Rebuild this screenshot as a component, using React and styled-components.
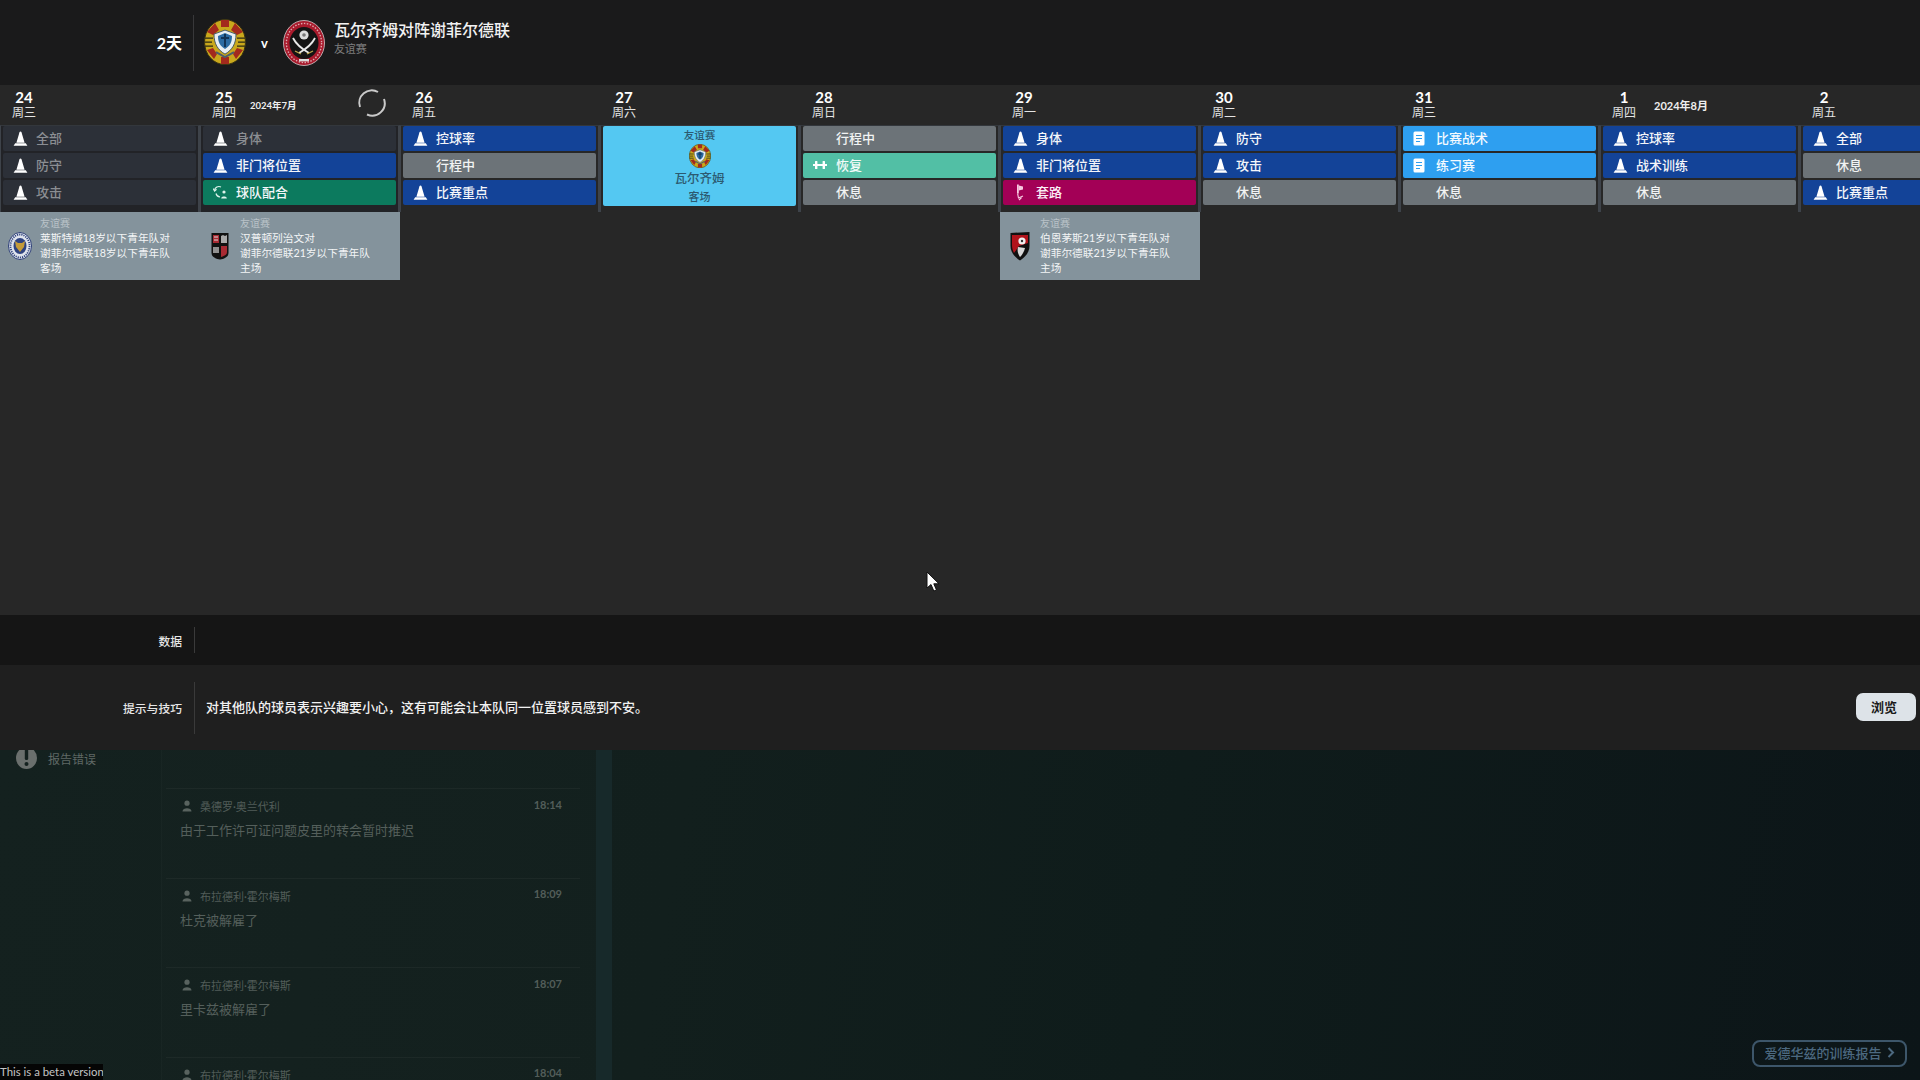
import React from 'react';
import styled, { createGlobalStyle } from 'styled-components';

const GlobalStyle = createGlobalStyle`
  html, body { margin: 0; padding: 0; background: #101a1a; }
  * { box-sizing: border-box; }
`;

const Page = styled.div`
  position: relative;
  width: 1920px;
  height: 1080px;
  overflow: hidden;
  display: flex;
  flex-direction: column;
  font-family: "Lato", "Noto Sans CJK SC", sans-serif;
  color: #fff;
`;

/* top bar with next match */
const TopBar = styled.header`
  height: 85px;
  background: #1a1a1b;
  display: flex;
  align-items: center;
`;

const Countdown = styled.div`
  width: 182px;
  text-align: right;
  font-size: 16px;
  font-weight: 700;
  margin-top: -2px;
`;

const TopDivider = styled.div`
  width: 1px;
  height: 56px;
  margin: 0 10px 0 11px;
  background: #38383a;
`;

const Versus = styled.div`
  display: flex;
  align-items: center;
  gap: 15px;
  margin-right: 9px;
  font-size: 13px;
  font-weight: 700;
`;

const MatchInfo = styled.div`
  margin-top: -9px;
`;

const MatchTitle = styled.div`
  font-size: 16px;
  font-weight: 500;
  line-height: 22px;
  color: #f2f2f2;
`;

const MatchSub = styled.div`
  font-size: 11px;
  line-height: 16px;
  color: #7d7d7d;
`;

/* calendar */
const Calendar = styled.section`
  height: 530px;
  background: #272727;
  display: flex;
  overflow: hidden;
`;

const Day = styled.div`
  flex: 0 0 200px;
  display: flex;
  flex-direction: column;
`;

const DayHead = styled.div`
  height: 40px;
  display: flex;
  align-items: center;
  padding-left: 12px;
`;

const DateStack = styled.div`
  width: 24px;
  text-align: center;
  font-weight: 700;
  font-size: 15px;
  line-height: 15px;
  white-space: nowrap;
  display: flex;
  flex-direction: column;
  align-items: center;
  padding-bottom: 1px;

  span {
    font-size: 12px;
    font-weight: 400;
    color: #e4e4e4;
    line-height: 15px;
  }
`;

const MonthLabel = styled.div`
  margin-left: ${(p) => p.$offset}px;
  font-size: ${(p) => p.$size}px;
  font-weight: 700;
  white-space: nowrap;
  color: #eee;
`;

const Spinner = styled.svg`
  margin-left: auto;
  margin-right: 13px;
  margin-top: -5px;
`;

const Slots = styled.div`
  height: 87px;
  padding: 0 2px 7px;
  border-left: 1px solid #3e434a;
  border-right: 2px solid #3e434a;
  border-top: 1px solid #33373c;
  display: flex;
  flex-direction: column;
  gap: 2px;
  background: ${(p) => (p.$dim ? '#222327' : 'transparent')};
`;

const tones = {
  dim: ['#2c3038', '#8b8e93'],
  blue: ['#134398', '#f4f6fa'],
  grey: ['#6c7378', '#f2f3f3'],
  green: ['#0c7a5e', '#f4f6fa'],
  teal: ['#52bfa5', '#f4fbf9'],
  magenta: ['#a30056', '#fbeef5'],
  sky: ['#2e9ff0', '#f4faff'],
};

const Slot = styled.div`
  flex: 0 0 25px;
  display: flex;
  align-items: center;
  border-radius: 2px;
  padding: 0 0 2px 10px;
  font-size: 13px;
  font-weight: 500;
  background: ${(p) => tones[p.$tone][0]};
  color: ${(p) => tones[p.$tone][1]};
`;

const SlotIcon = styled.span`
  flex: 0 0 23px;
  height: 16px;
  display: flex;
  align-items: center;
  margin-top: 1px;
`;

const MatchCard = styled.div`
  flex: 0 0 80px;
  border-radius: 2px;
  background: #54c8f2;
  color: #2c5a70;
  display: flex;
  flex-direction: column;
  align-items: center;
  padding-top: 1px;
  font-size: 10.5px;
  font-weight: 500;
`;

const MatchCardBadge = styled.div`
  margin-top: 2px;
  line-height: 0;
`;

const MatchCardName = styled.div`
  font-size: 12.5px;
  line-height: 18px;
  margin-top: 2px;
`;

const MatchCardPlace = styled.div`
  font-size: 11px;
  line-height: 17px;
`;

const Fixture = styled.div`
  height: 68px;
  background: #84939c;
  display: flex;
  align-items: center;
  padding-left: 8px;
`;

const FixtureBadge = styled.div`
  flex: 0 0 24px;
  margin-right: 8px;
  display: flex;
  justify-content: center;
`;

const FixtureText = styled.div`
  font-size: 10.7px;
  line-height: 15px;
  color: #f3f5f6;
  white-space: nowrap;

  small {
    display: block;
    font-size: 10px;
    line-height: 13px;
    color: #b9c2c8;
  }
`;

/* data + tips */
const DataBar = styled.div`
  height: 50px;
  background: #151515;
  display: flex;
  align-items: center;
`;

const TipsBar = styled.div`
  height: 85px;
  background: #1f1f1f;
  display: flex;
  align-items: center;
  padding-right: 4px;
`;

const RowLabel = styled.div`
  width: 182px;
  text-align: right;
  font-size: 11.8px;
  font-weight: 500;
  color: #e6e6e6;
`;

const RowDivider = styled.div`
  width: 1px;
  height: ${(p) => p.$h}px;
  margin: 0 11px 0 12px;
  background: #3a3a3a;
`;

const TipText = styled.div`
  flex: 1;
  font-size: 13px;
  font-weight: 500;
  color: #f2f2f2;
  margin-top: -2px;
`;

const BrowseButton = styled.button`
  width: 60px;
  height: 28px;
  border: 0;
  border-radius: 7px;
  background: #dde3e8;
  color: #1a1a1a;
  font-family: inherit;
  font-size: 13px;
  font-weight: 700;
  margin-top: -2px;
  padding: 0 4px 0 0;
`;

/* dimmed screen behind */
const Behind = styled.section`
  flex: 1;
  position: relative;
  overflow: hidden;
  display: flex;
  background: linear-gradient(100deg, #14211f 0%, #121f1d 35%, #0f1c1b 60%, #0c1518 100%);
`;

const SideNav = styled.div`
  flex: 0 0 161px;
`;

const ReportError = styled.div`
  display: flex;
  align-items: center;
  gap: 11px;
  padding-left: 16px;
  margin-top: -3px;
  font-size: 12px;
  color: #5f6865;
`;

const Feed = styled.div`
  flex: 0 0 435px;
  padding: 38px 16px 0 4px;
  background: rgba(255, 255, 255, 0.006);
  border-left: 1px solid rgba(255, 255, 255, 0.02);
`;

const FeedItem = styled.div`
  height: 89.5px;
  border-top: 1px solid rgba(255, 255, 255, 0.04);
  padding: 9px 18px 0 14px;
`;

const FeedHead = styled.div`
  display: flex;
  align-items: center;
  height: 16px;
  font-size: 11px;
  color: #525d59;

  svg {
    margin: 0 8px 0 2px;
  }
`;

const FeedTime = styled.span`
  margin-left: auto;
  font-size: 11px;
  font-weight: 700;
  margin-top: -4px;
`;

const FeedBody = styled.div`
  margin-top: 6px;
  font-size: 13px;
  line-height: 20px;
  color: #545f5b;
`;

const Scrollbar = styled.div`
  flex: 0 0 16px;
  background: #17292a;
`;

const BetaTag = styled.div`
  position: absolute;
  left: 0;
  bottom: 0;
  width: 103px;
  height: 16px;
  background: #050505;
  color: #c4c4c4;
  font-size: 11.4px;
  line-height: 15px;
  white-space: nowrap;
  overflow: hidden;
`;

const ReportLink = styled.div`
  position: absolute;
  right: 13px;
  bottom: 13px;
  width: 155px;
  height: 27px;
  border: 2px solid #3d566a;
  border-radius: 8px;
  color: #4c6980;
  font-size: 13px;
  font-weight: 500;
  display: flex;
  align-items: center;
  justify-content: center;
  gap: 5px;
  padding-bottom: 3px;
`;

const Cursor = styled.svg`
  position: absolute;
  left: 926px;
  top: 571px;
`;

/* icons */
const Cone = () => (
  <svg width="15" height="15" viewBox="0 0 15 15">
    <path d="M7.5 0.5c-1 0-1.2 1-1.5 2.6L3.4 11.8H11.6L9 3.1C8.7 1.5 8.5 0.5 7.5 0.5Z M2.2 12.2H12.8L14.4 14.8H0.6Z" fill="#fff" />
  </svg>
);

const Cohesion = () => (
  <svg width="15" height="15" viewBox="0 0 15 15" fill="none" stroke="#dff3ec" strokeWidth="1.2">
    <path d="M1.5 5.5A4.5 4.5 0 0 1 8 2" />
    <path d="M0 3.5L1.6 6L3.5 4.2" />
    <path d="M7 12A4.5 4.5 0 0 1 3 8.5" />
    <circle cx="11" cy="7" r="1.6" fill="#dff3ec" stroke="none" />
    <path d="M8.2 13.5c0-2.6 5.6-2.6 5.6 0Z" fill="#dff3ec" stroke="none" />
  </svg>
);

const Recovery = () => (
  <svg width="14" height="10" viewBox="0 0 14 10" fill="#fff">
    <rect x="0" y="4" width="14" height="2" />
    <rect x="2" y="1" width="2.4" height="8" rx="0.5" />
    <rect x="9.6" y="1" width="2.4" height="8" rx="0.5" />
  </svg>
);

const Routine = () => (
  <svg width="14" height="17" viewBox="0 0 14 17" fill="none" stroke="#f7c9e0" strokeWidth="1.2">
    <rect x="4" y="0.5" width="1.8" height="9" fill="#f7c9e0" stroke="none" />
    <path d="M5.8 1.5L10 2.5V5.5L5.8 6.5" fill="#f7c9e0" stroke="none" />
    <path d="M4.6 9.5L5.5 14L10 12" />
    <path d="M6 16L8.5 13.5" />
  </svg>
);

const Sheet = () => (
  <svg width="12" height="15" viewBox="0 0 12 15">
    <path d="M2 0.5H10a1.5 1.5 0 0 1 1.5 1.5V13a1.5 1.5 0 0 1-1.5 1.5H2A1.5 1.5 0 0 1 0.5 13V2A1.5 1.5 0 0 1 2 0.5Z" fill="#fff" />
    <path d="M3 4.5H9M3 7.5H9M3 10.5H7" stroke="#2e9ff0" strokeWidth="1.2" />
  </svg>
);

const icons = { cone: Cone, cohesion: Cohesion, recovery: Recovery, routine: Routine, sheet: Sheet };

const PersonGlyph = () => (
  <svg width="10" height="12" viewBox="0 0 10 12" fill="#59635f">
    <circle cx="5" cy="3.2" r="2.6" />
    <path d="M0.5 11.5c0-4.4 9-4.4 9 0Z" />
  </svg>
);

const VarzimBadge = ({ size = 42 }) => (
  <svg width={size} height={size * 1.1} viewBox="0 0 42 46">
    <ellipse cx="21" cy="23" rx="20.5" ry="22.5" fill="#c9a81c" stroke="#3a3312" strokeWidth="1" />
    <path d="M11 4L15 11 9 16 3 13ZM31 4L27 11 33 16 39 13ZM3 31L9 29 13 35 10 40ZM39 31L33 29 29 35 32 40Z" fill="#a32a1d" />
    <path d="M17 1H25V8H17ZM17 38H25V45H17Z" fill="#a32a1d" />
    <path d="M1 19H9M33 19H41M1 23H8M34 23H41M1 27H9M33 27H41" stroke="#2a2a14" strokeWidth="1.4" />
    <path d="M21 11L32 15C32 25 28 31 21 35C14 31 10 25 10 15Z" fill="#e8eef2" stroke="#27405c" strokeWidth="0.8" />
    <path d="M21 14L28 17C28 23 26 27 21 30C16 27 14 23 14 17Z" fill="#2b6ba3" />
    <path d="M21 15V28M17 19H25" stroke="#123356" strokeWidth="2" />
    <path d="M12 33L21 38 30 33" fill="none" stroke="#4d5e6c" strokeWidth="2" />
  </svg>
);

const SheffieldBadge = () => (
  <svg width="42" height="46" viewBox="0 0 42 46">
    <ellipse cx="21" cy="23" rx="20.5" ry="22.5" fill="#a81a2c" stroke="#d9ccce" strokeWidth="0.8" />
    <ellipse cx="21" cy="23" rx="17.6" ry="19.6" fill="none" stroke="#dca9af" strokeWidth="1.4" strokeDasharray="1.5 1.5" />
    <ellipse cx="21" cy="23" rx="14.5" ry="16" fill="#141414" />
    <circle cx="21" cy="15" r="4.6" fill="#dcdcdc" />
    <circle cx="21" cy="15" r="1.8" fill="#777" />
    <path d="M10 18C13 24 19 29 26 33" fill="none" stroke="#e8e8e8" strokeWidth="1.8" />
    <path d="M32 18C29 24 23 29 16 33" fill="none" stroke="#e8e8e8" strokeWidth="1.8" />
    <path d="M24 34L30 31M18 34L12 31" stroke="#bda44a" strokeWidth="1.3" />
    <rect x="16" y="39" width="10" height="2.4" fill="#ddd" />
  </svg>
);

const LeicesterBadge = () => (
  <svg width="24" height="28" viewBox="0 0 24 28">
    <ellipse cx="12" cy="14" rx="11.5" ry="13.5" fill="#dfe3ec" stroke="#2d3f77" strokeWidth="1" />
    <ellipse cx="12" cy="14" rx="9.5" ry="11.5" fill="none" stroke="#30447f" strokeWidth="1.8" strokeDasharray="1.2 1" />
    <ellipse cx="12" cy="14" rx="6.5" ry="8" fill="#2e4280" />
    <path d="M7 9L10 11H14L17 9 16 15 12 20 8 15Z" fill="#c39a3a" />
  </svg>
);

const HamptonBadge = () => (
  <svg width="18" height="28" viewBox="0 0 18 28">
    <path d="M0.5 1H17.5V21C17.5 25 13 27 9 27.5C5 27 0.5 25 0.5 21Z" fill="#111" />
    <path d="M2 3H8V11H2Z" fill="#a82a33" />
    <path d="M3 5H7M3 8H7" stroke="#ddd" strokeWidth="1" />
    <path d="M10 4L12 3 14 4 16 3V11H10Z" fill="#cfcfcf" opacity="0.8" />
    <rect x="2" y="15" width="6" height="6" fill="#bbb" opacity="0.75" />
    <path d="M10 14H16V20C16 23 13 24 10 25Z" fill="#a82a33" />
  </svg>
);

const BournemouthBadge = () => (
  <svg width="20" height="30" viewBox="0 0 20 30">
    <path d="M0.5 2L19.5 1V15C19.5 22 14 27 10 29.5C6 27 0.5 22 0.5 15Z" fill="#111" />
    <path d="M2 4H18V12L9 15 4 22C2.5 19 2 16 2 14Z" fill="#b1141c" />
    <path d="M8 16L15 17C14 21 12 24 10 26C8 23 7 20 8 16Z" fill="#d8d8d8" />
    <circle cx="12" cy="10" r="3.6" fill="#f0f0f0" />
    <circle cx="12" cy="10" r="1.2" fill="#333" />
  </svg>
);

const days = [
  { n: '24', w: '周三', dim: true, slots: [['dim', 'cone', '全部'], ['dim', 'cone', '防守'], ['dim', 'cone', '攻击']] },
  { n: '25', w: '周四', dim: true, month: '2024年7月', monthSize: 9.5, monthOffset: 14, spin: true,
    slots: [['dim', 'cone', '身体'], ['blue', 'cone', '非门将位置'], ['green', 'cohesion', '球队配合']] },
  { n: '26', w: '周五', slots: [['blue', 'cone', '控球率'], ['grey', null, '行程中'], ['blue', 'cone', '比赛重点']] },
  { n: '27', w: '周六', match: true },
  { n: '28', w: '周日', slots: [['grey', null, '行程中'], ['teal', 'recovery', '恢复'], ['grey', null, '休息']] },
  { n: '29', w: '周一', slots: [['blue', 'cone', '身体'], ['blue', 'cone', '非门将位置'], ['magenta', 'routine', '套路']] },
  { n: '30', w: '周二', slots: [['blue', 'cone', '防守'], ['blue', 'cone', '攻击'], ['grey', null, '休息']] },
  { n: '31', w: '周三', slots: [['sky', 'sheet', '比赛战术'], ['sky', 'sheet', '练习赛'], ['grey', null, '休息']] },
  { n: '1', w: '周四', month: '2024年8月', monthSize: 11, monthOffset: 18,
    slots: [['blue', 'cone', '控球率'], ['blue', 'cone', '战术训练'], ['grey', null, '休息']] },
  { n: '2', w: '周五', slots: [['blue', 'cone', '全部'], ['grey', null, '休息'], ['blue', 'cone', '比赛重点']] },
];

const fixtures = {
  '24': { badge: <LeicesterBadge />, lines: ['莱斯特城18岁以下青年队对', '谢菲尔德联18岁以下青年队', '客场'] },
  '25': { badge: <HamptonBadge />, lines: ['汉普顿列治文对', '谢菲尔德联21岁以下青年队', '主场'] },
  '29': { badge: <BournemouthBadge />, lines: ['伯恩茅斯21岁以下青年队对', '谢菲尔德联21岁以下青年队', '主场'] },
};

const feed = [
  { who: '桑德罗·奥兰代利', time: '18:14', text: '由于工作许可证问题皮里的转会暂时推迟' },
  { who: '布拉德利·霍尔梅斯', time: '18:09', text: '杜克被解雇了' },
  { who: '布拉德利·霍尔梅斯', time: '18:07', text: '里卡兹被解雇了' },
  { who: '布拉德利·霍尔梅斯', time: '18:04', text: '' },
];

function DayColumn({ day }) {
  const fixture = fixtures[day.n];
  return (
    <Day>
      <DayHead>
        <DateStack>
          {day.n}
          <span>{day.w}</span>
        </DateStack>
        {day.month && <MonthLabel $size={day.monthSize} $offset={day.monthOffset}>{day.month}</MonthLabel>}
        {day.spin && (
          <Spinner width="30" height="30" viewBox="0 0 30 30" fill="none" stroke="#c9c9c9" strokeWidth="2">
            <path d="M3 19A12.5 12.5 0 0 1 21 4" />
            <path d="M27 11A12.5 12.5 0 0 1 10 26.5" />
          </Spinner>
        )}
      </DayHead>
      <Slots $dim={day.dim}>
        {day.match ? (
          <MatchCard>
            友谊赛
            <MatchCardBadge><VarzimBadge size={22} /></MatchCardBadge>
            <MatchCardName>瓦尔齐姆</MatchCardName>
            <MatchCardPlace>客场</MatchCardPlace>
          </MatchCard>
        ) : day.slots.map(([tone, icon, label]) => {
          const Icon = icons[icon];
          return (
            <Slot key={label + tone} $tone={tone}>
              <SlotIcon>{Icon && <Icon />}</SlotIcon>
              {label}
            </Slot>
          );
        })}
      </Slots>
      {fixture && (
        <Fixture>
          <FixtureBadge>{fixture.badge}</FixtureBadge>
          <FixtureText>
            <small>友谊赛</small>
            {fixture.lines.map((l) => <div key={l}>{l}</div>)}
          </FixtureText>
        </Fixture>
      )}
    </Day>
  );
}

export default function App() {
  return (
    <Page>
      <GlobalStyle />
      <TopBar>
        <Countdown>2天</Countdown>
        <TopDivider />
        <Versus>
          <VarzimBadge />
          v
          <SheffieldBadge />
        </Versus>
        <MatchInfo>
          <MatchTitle>瓦尔齐姆对阵谢菲尔德联</MatchTitle>
          <MatchSub>友谊赛</MatchSub>
        </MatchInfo>
      </TopBar>

      <Calendar>
        {days.map((d) => <DayColumn key={d.n + d.w} day={d} />)}
      </Calendar>

      <DataBar>
        <RowLabel>数据</RowLabel>
        <RowDivider $h={26} />
      </DataBar>

      <TipsBar>
        <RowLabel>提示与技巧</RowLabel>
        <RowDivider $h={52} />
        <TipText>对其他队的球员表示兴趣要小心，这有可能会让本队同一位置球员感到不安。</TipText>
        <BrowseButton>浏览</BrowseButton>
      </TipsBar>

      <Behind>
        <SideNav>
          <ReportError>
            <svg width="21" height="22" viewBox="0 0 21 22">
              <ellipse cx="10.5" cy="11" rx="10.5" ry="11" fill="#6a6f6d" />
              <rect x="8.8" y="2" width="3.4" height="11" rx="1.5" fill="#14211f" />
              <circle cx="10.5" cy="17" r="2" fill="#14211f" />
            </svg>
            报告错误
          </ReportError>
        </SideNav>
        <Feed>
          {feed.map((item) => (
            <FeedItem key={item.time}>
              <FeedHead>
                <PersonGlyph />
                {item.who}
                <FeedTime>{item.time}</FeedTime>
              </FeedHead>
              <FeedBody>{item.text}</FeedBody>
            </FeedItem>
          ))}
        </Feed>
        <Scrollbar />
        <BetaTag>This is a beta version</BetaTag>
        <ReportLink>
          爱德华兹的训练报告
          <svg width="8" height="11" viewBox="0 0 8 11" fill="none" stroke="#4c6980" strokeWidth="2">
            <path d="M1.5 1L6 5.5L1.5 10" />
          </svg>
        </ReportLink>
      </Behind>

      <Cursor width="14" height="22" viewBox="0 0 14 22">
        <path d="M1 1V17L5 13.5L7.8 20L10.5 19L7.8 12.8H13Z" fill="#fff" stroke="#111" strokeWidth="1" />
      </Cursor>
    </Page>
  );
}
